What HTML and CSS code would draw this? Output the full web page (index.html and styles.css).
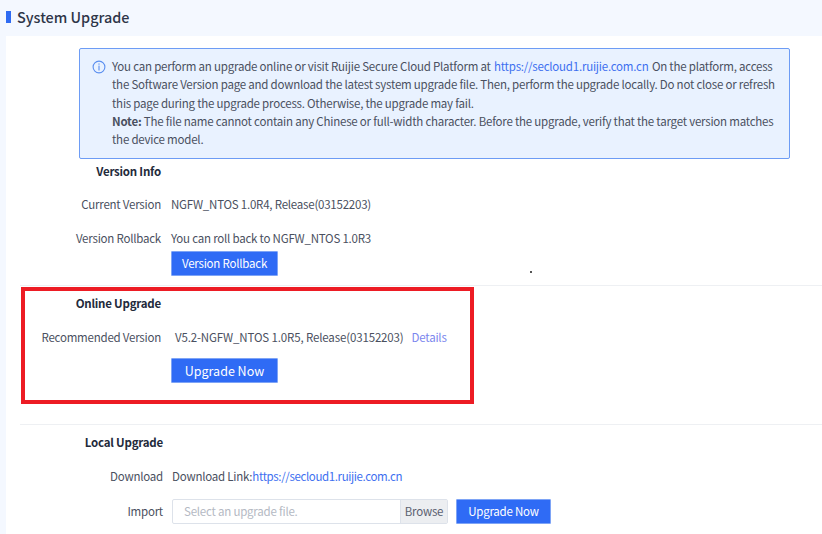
FILE: index.html
```html
<!DOCTYPE html>
<html lang="en">
<head>
<meta charset="utf-8">
<title>System Upgrade</title>
<link rel="stylesheet" href="styles.css">
</head>
<body>
<header class="page-head"><span class="head-mark"></span><h1>System Upgrade</h1></header>
<main class="panel">
  <div class="alert">
    <svg class="alert-icon" viewBox="0 0 14 14" width="14" height="14" aria-hidden="true"><circle cx="7" cy="7" r="5.9" fill="none" stroke="#5b8ff0" stroke-width="1.1"/><rect x="6.45" y="3.4" width="1.1" height="1.3" fill="#5b8ff0"/><rect x="6.45" y="5.6" width="1.1" height="4.9" fill="#5b8ff0"/></svg>
    <p class="alert-text">You can perform an upgrade online or visit Ruijie Secure Cloud Platform at <a class="alert-link" href="#">https://secloud1.ruijie.com.cn</a> On the platform, access<br>the Software Version page and download the latest system upgrade file. Then, perform the upgrade locally. Do not close or refresh<br>this page during the upgrade process. Otherwise, the upgrade may fail.<br><b>Note:</b> The file name cannot contain any Chinese or full-width character. Before the upgrade, verify that the target version matches<br>the device model.</p>
  </div>
  <section class="section first">
    <div class="row title-row"><h2>Version Info</h2></div>
    <div class="row info-row"><span class="label">Current Version</span><span class="value">NGFW_NTOS 1.0R4, Release(03152203)</span></div>
    <div class="row rollback-row"><span class="label">Version Rollback</span><span class="value">You can roll back to NGFW_NTOS 1.0R3</span></div>
    <div class="row btn-row"><span class="label"></span><button class="btn btn-wide">Version Rollback</button></div>
    <span class="speck"></span>
  </section>
  <section class="section online">
    <div class="row title-row"><h2>Online Upgrade</h2></div>
    <div class="row info-row"><span class="label">Recommended Version</span><span class="value shifted">V5.2-NGFW_NTOS 1.0R5, Release(03152203)<a class="details" href="#">Details</a></span></div>
    <div class="row btn-row"><span class="label"></span><button class="btn btn-wide btn-large">Upgrade Now</button></div>
    <div class="highlight"></div>
  </section>
  <section class="section local">
    <div class="row title-row"><h2>Local Upgrade</h2></div>
    <div class="row info-row"><span class="label">Download</span><span class="value">Download Link:<a class="download-link" href="#">https://secloud1.ruijie.com.cn</a></span></div>
    <div class="row import-row"><span class="label">Import</span>
      <div class="file-input"><span class="placeholder">Select an upgrade file.</span><span class="browse">Browse</span></div>
      <button class="btn btn-upload">Upgrade Now</button>
    </div>
  </section>
</main>
</body>
</html>
```
FILE: styles.css
```css
* { box-sizing: border-box; }
html, body { margin: 0; height: 534px; overflow: hidden; }
body { background: #f4f8ff; font-family: "Noto Sans CJK SC", "Noto Sans", sans-serif; font-size: 11.5px; letter-spacing: -0.22px; color: #4a5060; }
a { color: #3d6ff0; text-decoration: none; }
h1, h2, p { margin: 0; }
.page-head { height: 36px; display: flex; align-items: center; padding: 0 0 3px 6px; gap: 6px; }
.head-mark { width: 5px; height: 12px; background: #2f6bf2; }
h1 { font-size: 14.4px; letter-spacing: 0; font-weight: 500; color: #2e3548; line-height: 20px; }
.panel { margin-left: 6px; background: #fff; height: 498px; padding-top: 12px; }
.alert { margin-left: 73px; width: 711px; height: 111px; border: 1px solid #6d9cf5; border-radius: 2px; background: #e9f2ff; padding: 8px 0 0 13px; display: flex; gap: 5px; }
.alert-icon { flex: none; margin-top: 3px; margin-left: -1px; }
.alert-text { line-height: 18.25px; white-space: nowrap; margin-left: 1px; }
.alert-link { margin: 0 1px; }
.section { margin-left: 14px; position: relative; }
.section.first { height: 126px; }
.online { height: 139px; border-top: 1px solid #eef0f3; }
.local { border-top: 1px solid #eef0f3; }
.row { display: flex; align-items: center; }
.row h2, .row .label, .row .value { padding-bottom: 1px; }
h2 { font-size: 11.5px; font-weight: 700; color: #232a3b; width: 141px; text-align: right; }
.label { width: 141px; flex: none; text-align: right; }
.value { margin-left: 10px; }
.shifted { margin-left: 14px; letter-spacing: -0.14px; }
.details { margin-left: 8px; color: #7b86ee; letter-spacing: -0.22px; }
.download-link { letter-spacing: -0.38px; }
.title-row { height: 24px; }
.first .info-row { margin-top: 9px; height: 24px; }
.rollback-row { margin-top: 10px; height: 24px; }
.btn { height: 25px; background: #2f6bf5; color: #fff; border: 1px solid #7ea4f6; border-radius: 1px; font: inherit; letter-spacing: inherit; padding: 0 0 2px; }
.btn-wide { width: 107px; margin-left: 10px; }
.btn-large { font-size: 12.5px; letter-spacing: 0; padding-bottom: 0; }
.first .btn-row { margin-top: 1px; }
.online .title-row { margin-top: 5px; }
.online .info-row { margin-top: 10px; height: 24px; }
.online .btn-row { margin-top: 9px; }
.local .title-row { margin-top: 5px; }
.local .info-row { margin-top: 10px; height: 24px; }
.local .label, .local h2 { width: 143px; }
.local .value { margin-left: 9px; }
.import-row { margin-top: 11px; }
.file-input { margin-left: 9px; width: 276px; height: 25px; border: 1px solid #dde2ea; border-radius: 2px; display: flex; align-items: center; }
.placeholder { flex: 1; padding: 0 0 1px 11px; color: #b4b9c3; }
.browse { width: 47px; height: 100%; background: #eceef1; border-left: 1px solid #dde2ea; color: #5a6070; text-align: center; line-height: 22px; }
.btn-upload { width: 95px; margin-left: 8px; }
.speck { position: absolute; left: 510px; top: 112px; width: 2px; height: 2px; background: #555; }
.highlight { position: absolute; left: 1px; top: 1px; width: 453px; height: 117px; border: 4px solid #ed1c24; pointer-events: none; }
```
